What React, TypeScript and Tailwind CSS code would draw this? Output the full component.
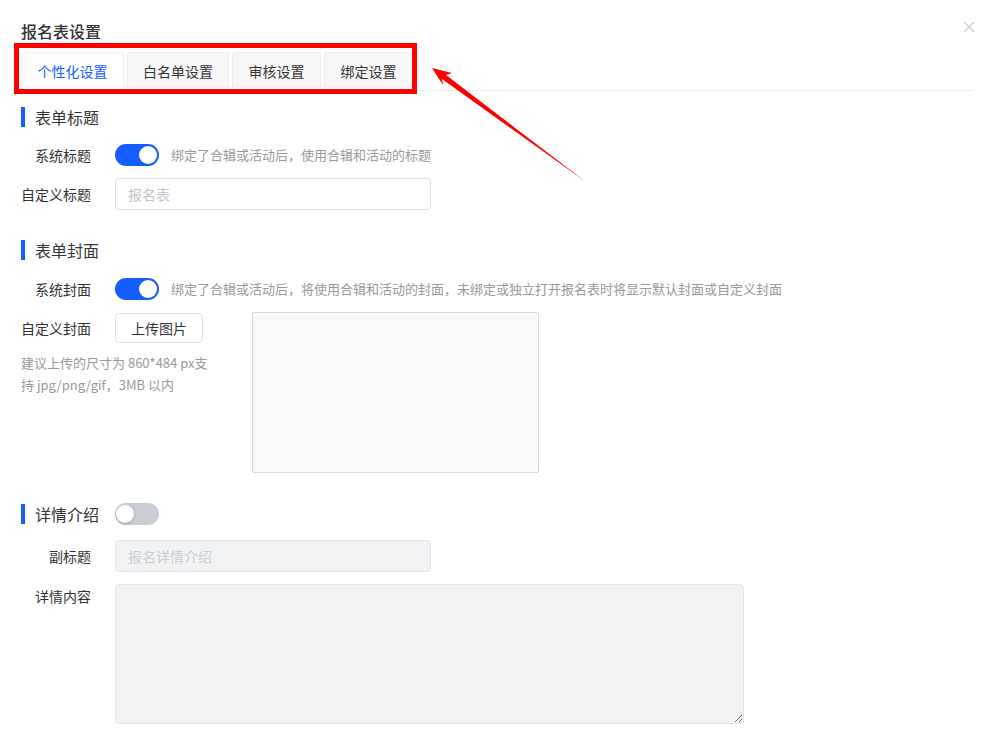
import React from "react";

const blue = "bg-[#165dff]";

function Toggle({ on }: { on: boolean }) {
  return (
    <div
      className={`relative h-[22px] w-[44px] shrink-0 rounded-full ${
        on ? blue : "bg-[#c9cdd4]"
      }`}
    >
      <span
        className={`absolute top-[2px] h-[18px] w-[18px] rounded-full bg-white ${
          on ? "right-[2px]" : "left-[1px] shadow-[0_1px_3px_rgba(0,0,0,0.25)]"
        }`}
      />
    </div>
  );
}

function SectionHead({ title, children }: { title: string; children?: React.ReactNode }) {
  return (
    <div className="flex h-[22px] items-center">
      <div className="flex w-[94px] items-center">
        <span className={`h-5 w-[4px] ${blue}`} />
        <span className="ml-[10px] text-[16px] leading-5 text-[#333]">{title}</span>
      </div>
      {children}
    </div>
  );
}

function Label({ text }: { text: string }) {
  return (
    <div className="w-[70px] shrink-0 text-right text-[14px] leading-[22px] text-[#333]">
      {text}
    </div>
  );
}

const tabs = [
  { name: "个性化设置", w: "w-[103px]" },
  { name: "白名单设置", w: "w-[102px]" },
  { name: "审核设置", w: "w-[89px]" },
  { name: "绑定设置", w: "w-[89px]" },
];

export default function App() {
  return (
    <div className="relative h-[746px] w-full overflow-hidden bg-white pl-[21px] pr-[20px] font-['Noto_Sans_CJK_SC','Noto_Sans',sans-serif]">
      <h1 className="pt-[19px] text-[16px] font-medium leading-6 text-[#333]">报名表设置</h1>

      {/* tabs */}
      <div className="mt-[9px] flex h-[39px] gap-[3px] border-b border-[#eeeeee]">
        {tabs.map((t, i) => (
          <div
            key={t.name}
            className={`${t.w} -mb-px flex h-[39px] items-center justify-center rounded-t-[3px] border text-[14px] ${
              i === 0
                ? "border-[#eeeeee] border-b-white bg-white text-[#165dff]"
                : "border-[#eeeeee] bg-[#f7f7f7] text-[#333]"
            }`}
          >
            {t.name}
          </div>
        ))}
      </div>

      {/* form title */}
      <div className="mt-[15px]">
        <SectionHead title="表单标题" />
      </div>
      <div className="mt-[16px] flex items-center gap-6">
        <Label text="系统标题" />
        <Toggle on />
        <span className="-ml-3 text-[13px] text-[#999]">绑定了合辑或活动后，使用合辑和活动的标题</span>
      </div>
      <div className="mt-3 flex items-center gap-6">
        <Label text="自定义标题" />
        <input
          readOnly
          placeholder="报名表"
          className="h-8 w-[316px] rounded-[4px] border border-[#dcdfe6] px-3 text-[14px] outline-none placeholder:text-[#c0c4cc]"
        />
      </div>

      {/* cover */}
      <div className="mt-[29px]">
        <SectionHead title="表单封面" />
      </div>
      <div className="mt-[17px] flex items-center gap-6">
        <Label text="系统封面" />
        <Toggle on />
        <span className="-ml-3 text-[13px] text-[#999]">
          绑定了合辑或活动后，将使用合辑和活动的封面，未绑定或独立打开报名表时将显示默认封面或自定义封面
        </span>
      </div>
      <div className="mt-3 flex">
        <div className="w-[231px] shrink-0">
          <div className="mt-px flex items-center gap-6">
            <Label text="自定义封面" />
            <button className="h-[30px] w-[88px] rounded-[4px] border border-[#dcdfe6] bg-white text-[14px] text-[#333]">
              上传图片
            </button>
          </div>
          <p className="mt-[9px] text-[13px] leading-[22px] text-[#999]">
            建议上传的尺寸为 860*484 px支
            <br />
            持 jpg/png/gif，3MB 以内
          </p>
        </div>
        <div className="h-[161px] w-[287px] rounded-[2px] border border-[#d9d9d9] bg-[#f9f9f9]" />
      </div>

      {/* detail */}
      <div className="mt-[30px]">
        <SectionHead title="详情介绍">
          <Toggle on={false} />
        </SectionHead>
      </div>
      <div className="mt-[15px] flex items-center gap-6">
        <Label text="副标题" />
        <input
          readOnly
          placeholder="报名详情介绍"
          className="h-8 w-[316px] rounded-[4px] border border-[#e5e6eb] bg-[#f2f3f5] px-3 text-[14px] outline-none placeholder:text-[#c9cdd4]"
        />
      </div>
      <div className="mt-3 flex items-start gap-6">
        <div className="pt-px">
          <Label text="详情内容" />
        </div>
        <textarea
          readOnly
          className="h-[140px] w-[629px] rounded-[4px] border border-[#e5e6eb] bg-[#f2f3f5] outline-none"
        />
      </div>

      {/* close */}
      <svg className="absolute left-[963px] top-[21px]" width="12" height="12" viewBox="0 0 12 12">
        <path d="M1 1L11 11M11 1L1 11" stroke="#c9cdd4" strokeWidth="1.2" />
      </svg>

      {/* annotation */}
      <div className="absolute left-[14px] top-[43px] h-[51px] w-[403px] border-[5px] border-[#ff0000]" />
      <svg className="absolute left-0 top-0" width="993" height="746" viewBox="0 0 993 746">
        <polygon
          points="432,68 452,73 446,75 586,182 442,79 443,85"
          fill="#ff0000"
        />
      </svg>
    </div>
  );
}
